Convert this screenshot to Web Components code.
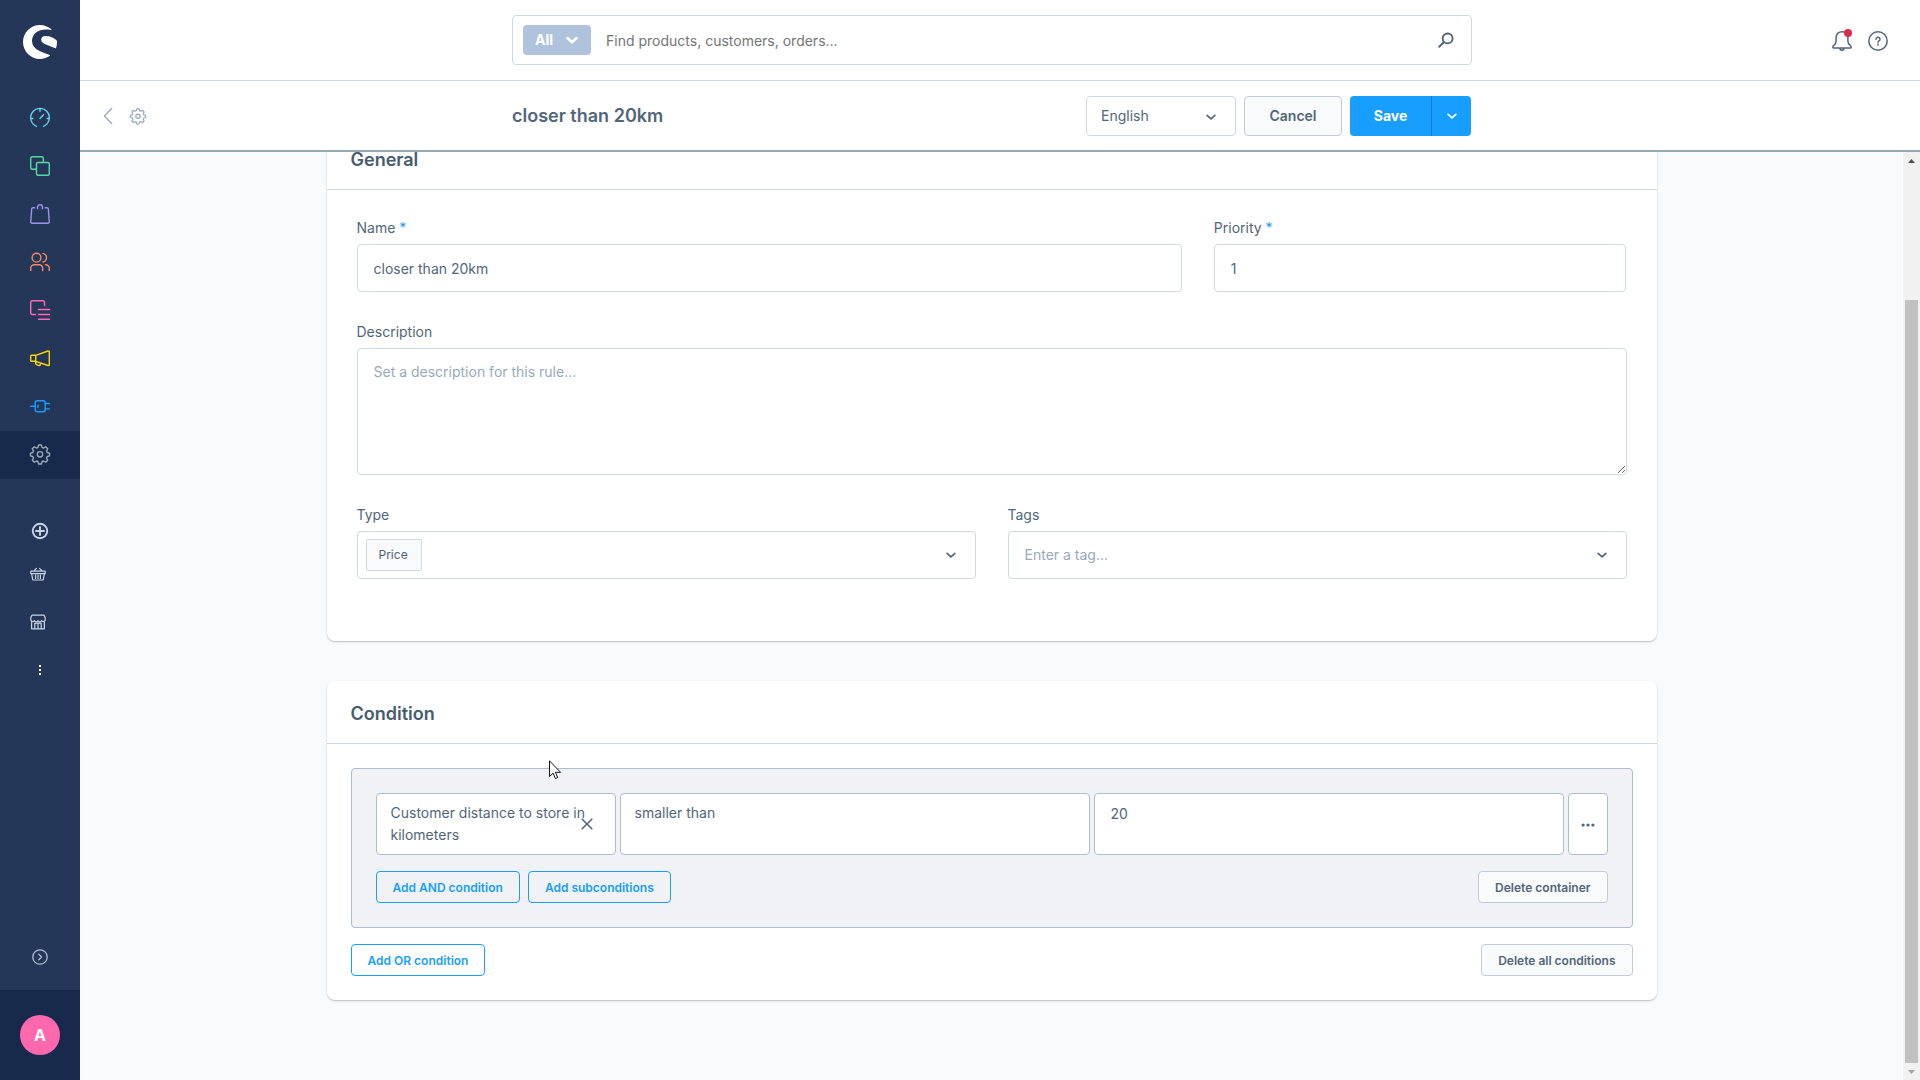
<!DOCTYPE html>
<html lang="en">
<head>
<meta charset="utf-8">
<title>closer than 20km | Rule builder</title>
<style>
  html, body { height: 100%; margin: 0; }
  body {
    --text: #52667a; --border: #d1d9e0; --border-strong: #aebccb; --primary: #189eff; --page: #f9fafb;
    font: 14px/22px Inter, "Open Sans", sans-serif; color: var(--text); background: var(--page); overflow: hidden;
  }
</style>
</head>
<body>
<admin-shell>
  <admin-sidebar slot="sidebar"></admin-sidebar>
  <admin-topbar slot="top"></admin-topbar>
  <admin-smartbar slot="top" heading="closer than 20km"></admin-smartbar>

  <admin-card heading="General">
    <form-grid>
      <form-row columns="2fr 1fr">
        <form-field label="Name" value="closer than 20km" required></form-field>
        <form-field label="Priority" value="1" required></form-field>
      </form-row>
      <form-row columns="1fr">
        <form-field kind="textarea" label="Description" placeholder="Set a description for this rule..."></form-field>
      </form-row>
      <form-row columns="1fr 1fr">
        <form-field kind="select" label="Type" tag="Price"></form-field>
        <form-field kind="select" label="Tags" placeholder="Enter a tag..."></form-field>
      </form-row>
    </form-grid>
  </admin-card>

  <admin-card heading="Condition">
    <condition-tree>
      <condition-row type="Customer distance to store in kilometers" operator="smaller than" value="20"></condition-row>
    </condition-tree>
  </admin-card>
</admin-shell>
<mouse-pointer></mouse-pointer>

<script>
const gear = '<path d="M8.6 1h2.8l.6 2.3 1.6.7 2.1-1.2 2 2-1.2 2.1.7 1.6 2.3.6v2.8l-2.3.6-.7 1.6 1.2 2.1-2 2-2.1-1.2-1.6.7-.6 2.3H8.600l-.6-2.300-1.600-.7-2.100 1.200-2-2 1.200-2.100-.7-1.600-2.300-.6V9.100l2.300-.6.7-1.600-1.200-2.100 2-2L6.400 4l1.600-.7z"/><circle cx="10" cy="10.300" r="2.700"/>';
const icons = {
  dashboard: '<path d="M6.500 18.300a9.300 9.300 0 1 1 7 0M10 1.200v2M.8 10.500h2M17.200 10.500h2M10 10.500l3.500-3.800"/>',
  products: '<path d="M6.300 13.300H2.200A1.500 1.500 0 0 1 .7 11.800V2.200A1.500 1.500 0 0 1 2.200.7h9.600a1.500 1.500 0 0 1 1.500 1.500v4.100"/><rect x="6.500" y="6.500" width="12.800" height="12.800" rx="1.500"/>',
  orders: '<path d="M4.600 3.700H3a1.300 1.300 0 0 0-1.300 1.200L.7 17.700a1.500 1.500 0 0 0 1.500 1.600h15.600a1.500 1.500 0 0 0 1.500-1.600l-1-12.800A1.300 1.300 0 0 0 17 3.700h-1.600M7.500 4.800V3.200a2.500 2.500 0 0 1 5 0v1.600"/>',
  customers: '<circle cx="6.500" cy="5.700" r="4.400"/><path d="M.7 18.500v-2.300a3.500 3.500 0 0 1 3.500-3.500h5a3.500 3.500 0 0 1 3.500 3.500v2.300M13 1.400a4.400 4.400 0 0 1 0 8.600M15.500 12.700a3.700 3.700 0 0 1 3.800 3.700v2.100"/>',
  content: '<path d="M5.500 14.500H2.200A1.500 1.500 0 0 1 .7 13V2.200A1.500 1.500 0 0 1 2.200.7H13a1.500 1.500 0 0 1 1.500 1.500v3.300M8.500 9.500h11M8.500 14.500h11M8.500 19.300h11"/>',
  marketing: '<path d="M5.700 7.300 18 3a1 1 0 0 1 1.300.9v12.700a1 1 0 0 1-1.300.9L5.700 13.300zM5.700 7.300H1.500a.8.800 0 0 0-.8.8v4.400c0 .4.400.8.8.8h4.200M5.700 13.500v2.300c0 1 3.300 2.100 4.300 1.600l.6-2.300"/>',
  extensions: '<rect x="5.200" y="4.700" width="10" height="11" rx="2"/><path d="M.7 10.200h4.500M15.200 7.500h4.200M15.200 12.900h4.200M8 9.200v2"/>',
  gear,
  plus: '<circle cx="10" cy="10" r="9"/><path d="M10 5v10M5 10h10"/>',
  basket: '<path d="M1 6.500h18v3H1zM2 9.500l1.500 8h13l1.500-8M4.500 6.500 8 3M15.500 6.500 12 3M7 11.500v4M10 11.500v4M13 11.500v4"/>',
  store: '<path d="M2.500 1.500h15L19 4.500v3a2.500 2.500 0 0 1-4.500.8 2.500 2.500 0 0 1-4.500 0 2.500 2.500 0 0 1-4.500 0A2.500 2.500 0 0 1 1 7.500v-3zM2 9v9.500h16V9M6 18.500v-7h8v7M10 11.500v7"/>',
  collapse: '<circle cx="10" cy="10" r="9"/><path d="m8.500 6.500 3.500 3.500-3.500 3.500"/>',
  chevron: '<path d="m3.500 7.200 6.500 6 6.500-6"/>',
  back: '<path d="M14.500.7 5.500 10l9 9.300"/>',
  search: '<circle cx="12" cy="8" r="6.200"/><path d="M7.500 12.500 1.500 18.500"/>',
  bell: '<path d="M1.700 17c-1 0-1.200-1.200-.6-1.800 1.500-1.500 3-2.500 3-5V6.500C4.100 3 6.500.8 10 .8s5.900 2.200 5.900 5.700v3.700c0 2.500 1.500 3.500 3 5 .6.600.4 1.800-.6 1.800zM7.800 17.500c.4 2.300 4 2.300 4.400 0"/>',
  help: '<circle cx="10" cy="10" r="9.200"/><path d="M8 8.200a2 2 0 1 1 3 1.700c-.6.400-1 .6-1 1.400M10 13v1"/>',
  close: '<path d="m2 2 16 16M18 2 2 18"/>',
  dots: '<g fill="currentColor" stroke="none"><circle cx="3" cy="10" r="2.300"/><circle cx="10" cy="10" r="2.300"/><circle cx="17" cy="10" r="2.300"/></g>'
};

const base = `*,:host{box-sizing:border-box} :host{display:block} :host([hidden]){display:none}
  button,input,select,textarea{font:inherit;color:inherit;margin:0;outline:0} button{cursor:pointer}`;

class Base extends HTMLElement {
  connectedCallback() {
    if (this.shadowRoot) return;
    this.attachShadow({ mode: 'open' }).innerHTML = `<style>${base}${this.styles()}</style>${this.markup()}`;
  }
  styles() { return ''; }
  markup() { return '<slot></slot>'; }
  attr(name) { return this.getAttribute(name) || ''; }
}

customElements.define('ui-icon', class extends Base {
  styles() {
    return `:host{display:inline-block;flex:none;line-height:0}
      svg{display:block;overflow:visible;fill:none;stroke:currentColor;stroke-linecap:round;stroke-linejoin:round}`;
  }
  markup() {
    const s = this.attr('size') || 20, w = this.attr('weight') || 1.4;
    return `<svg width="${s}" height="${s}" viewBox="0 0 20 20" stroke-width="${w}" aria-hidden="true">${icons[this.attr('name')]}</svg>`;
  }
});

customElements.define('ui-button', class extends Base {
  styles() {
    return `:host{display:inline-block}
      button{display:flex;align-items:center;justify-content:center;height:40px;min-width:98px;padding:0 24px;border:1px solid #c2ccd8;border-radius:4px;
        background:var(--page);font-weight:600;white-space:nowrap}
      :host([small]) button{height:32px;padding:1px 16px 0;font-size:12px}
      :host([ghost]) button{background:transparent;border-color:var(--primary);color:var(--primary)}`;
  }
  markup() { return '<button type="button"><slot></slot></button>'; }
});

customElements.define('admin-shell', class extends Base {
  styles() {
    return `:host{display:flex;height:100vh}
      .page{flex:1;min-width:0;display:flex;flex-direction:column}
      .body{flex:1;min-height:0;display:flex}
      .scroll{flex:1;overflow-y:auto;scrollbar-width:none}
      .cards{display:flex;flex-direction:column;gap:40px;max-width:1330px;margin:0 auto;padding:134px 0 80px}`;
  }
  markup() {
    return `<slot name="sidebar"></slot>
      <div class="page"><slot name="top"></slot>
        <div class="body"><main class="scroll"><div class="cards"><slot></slot></div></main><scroll-track></scroll-track></div>
      </div>`;
  }
  toEnd() { const s = this.shadowRoot.querySelector('.scroll'); s.scrollTop = s.scrollHeight; }
});

customElements.define('scroll-track', class extends Base {
  styles() {
    return `:host{display:flex;flex-direction:column;width:17px;background:#f1f1f1}
      .end{height:17px;display:flex;align-items:center;justify-content:center;color:#505050}
      .rail{flex:1;display:flex;flex-direction:column;justify-content:flex-end;padding:0 2px}
      .thumb{height:85.4%;background:#c1c1c1}
      svg{display:block}`;
  }
  markup() {
    return `<div class="end"><svg width="7" height="4"><path d="M0 4 3.500 0 7 4z" fill="currentColor"/></svg></div>
      <div class="rail"><div class="thumb"></div></div>
      <div class="end"><svg width="7" height="4"><path d="M0 0 3.500 4 7 0z" fill="#a3a3a3"/></svg></div>`;
  }
});

customElements.define('admin-sidebar', class extends Base {
  styles() {
    return `:host{display:flex;flex-direction:column;width:80px;flex:none;background:#243758;color:#fff}
      .logo{height:95px;padding:25px 23px}
      .logo svg{display:block}
      nav{display:flex;flex-direction:column}
      a{display:flex;align-items:center;justify-content:center;height:48px;padding-bottom:2px;color:var(--c,#c8d3e4)}
      a.active{background:#172a4c}
      .extra{padding-top:28px}
      .extra a{padding-bottom:0}
      .extra a.left{padding-right:4px}
      .spacer{flex:1}
      .toggle{height:66px;padding:0;display:flex;align-items:center;justify-content:center;border:0;background:none;color:#b0bfd4;width:100%}
      .user{height:90px;background:#172a4c;display:flex;align-items:center;justify-content:center}
      .user button{width:40px;height:40px;padding:0;border:0;border-radius:50%;background:#ff68ac;color:#fff;font-weight:700;font-size:16px}`;
  }
  markup() {
    const main = [['dashboard', 'Dashboard', '#63cfe8'], ['products', 'Catalogues', '#57d9a3'], ['orders', 'Orders', '#a092f0'], ['customers', 'Customers', '#f88962'],
      ['content', 'Content', '#ff68b4'], ['marketing', 'Marketing', '#ffd700'], ['extensions', 'Extensions', '#189eff'], ['gear', 'Settings', '#9aa8b5']];
    const link = ([i, l, c], n) => `<a href="#${i}" aria-label="${l}" style="--c:${c}"${n === 7 ? ' class="active"' : ''}><ui-icon name="${i}"></ui-icon></a>`;
    return `<div class="logo"><svg width="34" height="34" viewBox="0 0 34 34" fill="#fff" aria-hidden="true">
        <path d="M28.300 4.300C25.400 1.600 21.400 0 17 0 7.600 0 0 7.600 0 17s7.600 17 17 17c3.700 0 7.200-1.200 10-3.200.3-.2.2-.5-.1-.7-7.700-2.900-17.900-5.300-17.900-14C9 9 15 4.600 23 4.600c1.700 0 3.400.1 4.900.4.600.1.800-.3.400-.7z"/>
        <path d="M33.200 15c-2.300-1.900-6-4-10.700-4-2.700 0-4.300 1.700-4.300 3.700 0 4.300 7.500 5.400 14.200 8.500.4.200.6 0 .7-.3.700-2.300 1.100-4.500.8-6.900-.1-.5-.3-.7-.7-1z"/></svg></div>
      <nav aria-label="Main">${main.map(link).join('')}</nav>
      <nav class="extra" aria-label="Shortcuts">
        <a href="#add" aria-label="Add"><ui-icon name="plus" size="16" weight="2.400"></ui-icon></a>
        <a class="left" href="#basket" aria-label="Basket" style="height:38px"><ui-icon name="basket" size="16" weight="1.500"></ui-icon></a>
        <a class="left" href="#store" aria-label="Storefront" style="height:58px"><ui-icon name="store" size="16" weight="1.500"></ui-icon></a>
        <a href="#more" aria-label="More" style="height:38px"><svg width="2" height="10" fill="#fff"><path d="M0 0h2v2H0zM0 4h2v2H0zM0 8h2v2H0z"/></svg></a>
      </nav>
      <div class="spacer"></div>
      <button class="toggle" type="button" aria-label="Expand menu"><ui-icon name="collapse" size="16" weight="1.600"></ui-icon></button>
      <div class="user"><button type="button">A</button></div>`;
  }
});

const barGrid = `display:grid;grid-template-columns:1fr minmax(0,960px) 1fr;align-items:center;padding-right:16px;background:#fff;flex:none`;

customElements.define('admin-topbar', class extends Base {
  styles() {
    return `:host{${barGrid};height:81px;border-bottom:1px solid var(--border)}
      .search{grid-column:2;display:flex;align-items:center;height:50px;padding:0 17px 0 10px;border:1px solid var(--border);border-radius:4px}
      .scope{display:flex;align-items:center;gap:12px;height:30px;padding:0 12px;border:0;border-radius:4px;background:#afc4dc;color:#fff;font-weight:700}
      input{flex:1;min-width:0;height:30px;padding:0 15px;border:0;background:none}
      input::placeholder{color:#757575;opacity:1}
      .go,.tools button{border:0;padding:0;background:none;display:flex}
      .tools{display:flex;justify-content:flex-end;gap:16px;padding:2px 16px 0 0}
      .bell{position:relative}
      .bell::after{content:"";position:absolute;right:0;top:-2px;width:8px;height:8px;border-radius:50%;background:#de294c}`;
  }
  markup() {
    return `<div class="search">
        <button class="scope" type="button">All<ui-icon name="chevron" size="14" weight="3.600"></ui-icon></button>
        <input type="search" aria-label="Search" placeholder="Find products, customers, orders...">
        <button class="go" type="button" aria-label="Search"><ui-icon name="search" size="16" weight="2.400"></ui-icon></button>
      </div>
      <div class="tools">
        <button class="bell" type="button" aria-label="Notifications"><ui-icon name="bell" weight="1.500"></ui-icon></button>
        <button type="button" aria-label="Help"><ui-icon name="help" weight="1.500"></ui-icon></button>
      </div>`;
  }
});

customElements.define('admin-smartbar', class extends Base {
  styles() {
    return `:host{${barGrid};height:71px;border-bottom:2px solid #98a7b5}
      .nav{display:flex;align-items:center;gap:14px;padding-left:20px;color:#98a9ba}
      .nav a{display:flex;color:inherit}
      .mid{display:flex;align-items:center;gap:8px;padding-right:1px}
      h1{flex:1;margin:0;font-size:18px;line-height:24px;font-weight:600}
      .lang{position:relative;width:150px}
      select{display:block;appearance:none;width:100%;height:40px;padding:0 40px 0 14px;border:1px solid var(--border);border-radius:4px;background:#fff}
      .lang ui-icon{position:absolute;right:19px;top:15px;pointer-events:none}
      .save{display:flex;color:#fff}
      .save button{height:40px;border:0;background:var(--primary);font-weight:700}
      .main{width:81px;border-radius:4px 0 0 4px}
      .save .more{width:40px;padding:0;border-radius:0 4px 4px 0;border-left:1px solid #0f7fd4;display:flex;align-items:center;justify-content:center}`;
  }
  markup() {
    return `<div class="nav"><a href="#back" aria-label="Back"><ui-icon name="back" size="16" weight="1.700"></ui-icon></a>
        <a href="#settings" aria-label="Settings"><ui-icon name="gear" size="16" weight="1.500"></ui-icon></a></div>
      <div class="mid"><h1>${this.attr('heading')}</h1>
        <div class="lang"><select aria-label="Language"><option>English</option></select><ui-icon name="chevron" size="12" weight="2.800"></ui-icon></div>
        <ui-button>Cancel</ui-button>
        <div class="save"><button class="main" type="button">Save</button><button class="more" type="button" aria-label="More save options"><ui-icon name="chevron" size="12" weight="2.800"></ui-icon></button></div>
      </div>`;
  }
});

customElements.define('admin-card', class extends Base {
  styles() {
    return `:host{background:#fff;border-radius:8px;box-shadow:0 1px 1px rgba(0,0,0,.14),0 1px 3px rgba(0,0,0,.12)}
      h2{margin:0;padding:21px 24px 17px;font-size:18px;line-height:24px;font-weight:600;color:#475b6e;border-bottom:1px solid var(--border)}`;
  }
  markup() { return `<h2>${this.attr('heading')}</h2><slot></slot>`; }
});

customElements.define('form-grid', class extends Base {
  styles() { return ':host{display:flex;flex-direction:column;gap:32px;padding:30px 30px 62px}'; }
});

customElements.define('form-row', class extends Base {
  styles() { return `:host{display:grid;gap:32px;grid-template-columns:${this.attr('columns')}}`; }
});

customElements.define('form-field', class extends Base {
  styles() {
    return `:host{min-width:0}
      label{display:block;line-height:16px;margin-bottom:8px}
      .req{color:var(--primary)}
      .box{display:flex;align-items:center;height:48px;width:100%;border:1px solid var(--border);border-radius:4px;background:#fff}
      input.box{padding:0 16px}
      textarea{display:block;width:100%;height:127px;padding:12px 16px;border:1px solid var(--border);border-radius:4px;background:#fff;resize:vertical}
      .box input{flex:1;min-width:0;border:0;background:none;padding:0}
      div.box{padding:0 18px 0 16px;gap:8px}
      div.tagged{padding-left:8px}
      .tag{display:flex;align-items:center;height:32px;padding:0 13px 0 12px;border:1px solid var(--border);border-radius:2px;background:var(--page);font-size:12px}
      ::placeholder{color:#98a9bd;opacity:1}`;
  }
  markup() {
    const ph = this.attr('placeholder'), kind = this.attr('kind'), tag = this.attr('tag');
    const label = `<label for="control">${this.attr('label')}${this.hasAttribute('required') ? ' <span class="req">*</span>' : ''}</label>`;
    if (kind === 'textarea') return `${label}<textarea id="control" placeholder="${ph}"></textarea>`;
    if (kind === 'select') return `${label}<div class="box${tag ? ' tagged' : ''}">${tag ? `<span class="tag">${tag}</span>` : ''}
      <input id="control" role="combobox" aria-expanded="false" placeholder="${ph}"><ui-icon name="chevron" size="12" weight="2.800"></ui-icon></div>`;
    return `${label}<input class="box" id="control" type="text" value="${this.attr('value')}">`;
  }
});

customElements.define('condition-tree', class extends Base {
  styles() {
    return `:host{padding:24px}
      .container{display:flex;flex-direction:column;gap:16px;padding:24px;margin-bottom:16px;border:1px solid var(--border-strong);border-radius:4px;background:#f0f2f5}
      .actions{display:flex;gap:8px}
      .end{margin-left:auto}`;
  }
  markup() {
    return `<div class="container"><slot></slot>
        <div class="actions"><ui-button small ghost>Add AND condition</ui-button><ui-button small ghost>Add subconditions</ui-button><ui-button class="end" small>Delete container</ui-button></div>
      </div>
      <div class="actions"><ui-button small ghost>Add OR condition</ui-button><ui-button class="end" small>Delete all conditions</ui-button></div>`;
  }
});

customElements.define('condition-row', class extends Base {
  styles() {
    return `:host{display:grid;grid-template-columns:240px 1fr 1fr 40px;gap:4px}
      .cell{width:100%;height:62px;border:1px solid var(--border-strong);border-radius:4px;background:#fff;padding:8px 14px 30px;line-height:22px;text-align:left;appearance:none}
      .type{position:relative}
      .type .cell{padding:8px 14px}
      .clear{position:absolute;right:23px;top:25px;border:0;padding:0;background:none;display:flex}
      input.cell{padding-left:16px}
      .menu{display:flex;align-items:center;justify-content:center;padding:2px 0 0}`;
  }
  markup() {
    return `<div class="type"><button class="cell" type="button" role="combobox" aria-expanded="false">${this.attr('type')}</button>
        <button class="clear" type="button" aria-label="Clear"><ui-icon name="close" size="12" weight="2.600"></ui-icon></button></div>
      <select class="cell" aria-label="Operator"><option>${this.attr('operator')}</option></select>
      <input class="cell" type="text" aria-label="Distance" value="${this.attr('value')}">
      <button class="cell menu" type="button" aria-label="Condition menu"><ui-icon name="dots" size="14"></ui-icon></button>`;
  }
});

customElements.define('mouse-pointer', class extends Base {
  styles() { return ':host{position:absolute;left:549px;top:760px;pointer-events:none} svg{display:block}'; }
  markup() {
    return `<svg width="13" height="20" viewBox="0 0 13 20"><path d="M.5.800v15.700l3.600-3.400 2.300 5.400 2.300-1-2.300-5.200h5.100z" fill="#fff" stroke="#14141e"/></svg>`;
  }
});

document.querySelector('admin-shell').toEnd();
</script>
</body>
</html>
